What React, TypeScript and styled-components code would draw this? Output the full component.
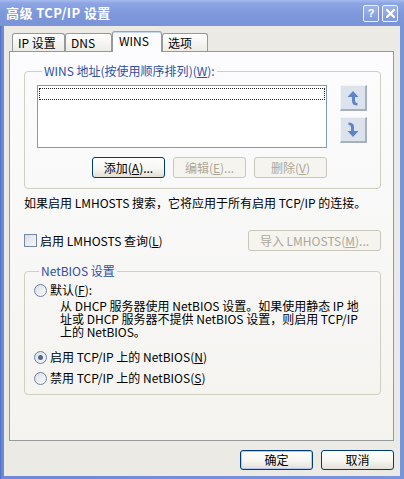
import React from 'react';
import styled, { createGlobalStyle, css } from 'styled-components';

const GlobalStyle = createGlobalStyle`
  * {
    box-sizing: border-box;
  }
  html, body {
    margin: 0;
    padding: 0;
    background: #ffffff;
  }
  body {
    width: 404px;
    height: 479px;
    overflow: hidden;
    font-family: "Noto Sans CJK SC", "Noto Sans", sans-serif;
    font-size: 12px;
    color: #000;
  }
`;

const Window = styled.div`
  width: 404px;
  height: 479px;
  display: flex;
  flex-direction: column;
  background: linear-gradient(to right, #4d6cc2, #6f8ad6 2px, #7a94da);
`;

const TitleBar = styled.div`
  height: 26px;
  flex: none;
  display: flex;
  align-items: center;
  padding: 0 6px 0 6px;
  background: linear-gradient(#a6bbef 0, #8ea6e4 3px, #7f98dc 50%, #7a93d8 100%);
  color: #fff;
`;

const TitleText = styled.div`
  font-weight: 700;
  font-size: 13px;
  line-height: 16px;
  letter-spacing: 0.4px;
  white-space: pre;
`;

const TitleButtons = styled.div`
  margin-left: auto;
  display: flex;
  gap: 3px;
  margin-top: 1px;
`;

const TitleButton = styled.div`
  width: 16px;
  height: 17px;
  border: 1px solid #eef2fc;
  border-radius: 2px;
  background: linear-gradient(#9fb4ea, #7f99de);
  display: flex;
  align-items: center;
  justify-content: center;
  color: #fff;
  font-family: "Liberation Sans", sans-serif;
  font-weight: 700;
  font-size: 11px;
  line-height: 1;
`;

const Body = styled.div`
  flex: 1;
  display: flex;
  flex-direction: column;
  margin: 0 4px 3px 4px;
  padding: 5px 6px 0 5px;
  background: #ebeae5;
`;

const TabStrip = styled.div`
  height: 21px;
  flex: none;
  display: flex;
  align-items: flex-end;
  padding-left: 3px;
  margin-bottom: -1px;
  position: relative;
  z-index: 1;
`;

const Tab = styled.div<{ $w: number; $active?: boolean }>`
  width: ${(p) => p.$w}px;
  height: 18px;
  margin-bottom: 1px;
  padding-left: 5px;
  border: 1px solid #919b9c;
  border-bottom: none;
  border-radius: 3px 3px 0 0;
  background: linear-gradient(#ffffff, #ecebe6);
  line-height: 17px;
  white-space: pre;
  ${(p) =>
    p.$active &&
    css`
      height: 21px;
      margin-bottom: 0;
      padding-left: 6px;
      line-height: 18px;
      border-top-color: #8aa3d2;
      background: #fcfcfe;
      box-shadow: inset 0 1px 0 #c8d5ef;
    `}
`;

const TabPanel = styled.div`
  flex: none;
  height: 390px;
  display: flex;
  flex-direction: column;
  border: 1px solid #919b9c;
  background: linear-gradient(#fcfcfe, #f4f3ef);
  padding: 0 12px 0 14px;
`;

const Group = styled.fieldset<{ $top: number; $pad: string }>`
  margin: ${(p) => p.$top}px 0 0 0;
  padding: ${(p) => p.$pad};
  min-width: 0;
  border: 1px solid #d0d0bf;
  border-radius: 4px;
`;

const Legend = styled.legend`
  margin-left: 5px;
  padding: 0 2px;
  color: #2d4fa3;
  line-height: 14px;
  white-space: pre;
`;

const ListRow = styled.div`
  display: flex;
  gap: 13px;
`;

const ListBox = styled.div`
  width: 290px;
  height: 63px;
  background: #fff;
  border: 1px solid #7f9db9;
  padding: 2px 1px;
`;

const FocusRow = styled.div`
  height: 12px;
  border: 1px dotted #222;
`;

const ArrowColumn = styled.div`
  display: flex;
  flex-direction: column;
  gap: 6px;
`;

const ArrowButton = styled.div`
  width: 27px;
  height: 26px;
  display: flex;
  align-items: center;
  justify-content: center;
  background: #dde3ec;
  border-top: 1px solid #f1f4f8;
  border-left: 1px solid #f1f4f8;
  border-right: 2px solid #a7b0bd;
  border-bottom: 2px solid #a7b0bd;
`;

const ButtonRow = styled.div`
  width: 290px;
  margin-top: 9px;
  display: flex;
  justify-content: flex-end;
  gap: 8px;
`;

const Button = styled.button<{ $w: number; $h?: number; $default?: boolean }>`
  width: ${(p) => p.$w}px;
  height: ${(p) => p.$h ?? 21}px;
  padding: 0;
  border: 1px solid #003c74;
  border-radius: 3px;
  background: linear-gradient(#ffffff, #f6f6f2 55%, #e2dfd6);
  font-family: inherit;
  font-size: 12px;
  line-height: 14px;
  color: #000;
  white-space: pre;
  ${(p) =>
    p.$default &&
    css`
      box-shadow: inset 0 0 0 1px #b5c8ef;
    `}
  &:disabled {
    border-color: #c9c7ba;
    background: #f5f4ee;
    color: #aca899;
  }
`;

const InfoText = styled.div`
  margin-top: 7px;
  line-height: 14px;
  white-space: pre;
`;

const CheckRow = styled.div`
  margin-top: 20px;
  height: 21px;
  display: flex;
  align-items: center;
  justify-content: space-between;
`;

const Choice = styled.label`
  display: flex;
  align-items: center;
  gap: 3px;
  line-height: 14px;
`;

const ChoiceText = styled.span`
  white-space: pre;
`;

const CheckBox = styled.span`
  width: 13px;
  height: 13px;
  border: 1px solid #7688a4;
  background: linear-gradient(135deg, #d9dde6, #f7f8fa);
`;

const RadioRow = styled(Choice)<{ $top?: number }>`
  margin-top: ${(p) => p.$top ?? 0}px;
  height: 14px;
`;

const Radio = styled.span<{ $checked?: boolean }>`
  width: 13px;
  height: 13px;
  border-radius: 50%;
  border: 1px solid #6f82a0;
  background: linear-gradient(135deg, #dadee6, #fbfbfc);
  display: flex;
  align-items: center;
  justify-content: center;
  &::after {
    content: '';
    width: 5px;
    height: 5px;
    border-radius: 50%;
    background: ${(p) => (p.$checked ? '#53688a' : 'transparent')};
  }
`;

const Description = styled.div`
  margin: 2px 0 0 26px;
  line-height: 13px;
  white-space: pre;
`;

const Footer = styled.div`
  margin-top: 9px;
  display: flex;
  justify-content: flex-end;
  gap: 8px;
`;

const UpArrow = () => (
  <svg width="12" height="16" viewBox="0 0 12 16">
    <path d="M6 1 L11.5 7 H8 V11 Q8 13 10.5 13 V15.5 Q5 15.5 5 11 V7 H0.5 Z" fill="#5f84c8" />
  </svg>
);

const DownArrow = () => (
  <svg width="12" height="16" viewBox="0 0 12 16">
    <path d="M6 15 L0.5 9 H4 V5 Q4 3 1.5 3 V0.5 Q7 0.5 7 5 V9 H11.5 Z" fill="#5f84c8" />
  </svg>
);

const CloseGlyph = () => (
  <svg width="9" height="9" viewBox="0 0 9 9">
    <path d="M1 1 L8 8 M8 1 L1 8" stroke="#fff" strokeWidth="2.2" strokeLinecap="square" />
  </svg>
);

const App: React.FC = () => {
  return (
    <>
      <GlobalStyle />
      <Window>
        <TitleBar>
          <TitleText>高级 TCP/IP 设置</TitleText>
          <TitleButtons>
            <TitleButton>?</TitleButton>
            <TitleButton>
              <CloseGlyph />
            </TitleButton>
          </TitleButtons>
        </TitleBar>
        <Body>
          <TabStrip>
            <Tab $w={53}>IP 设置</Tab>
            <Tab $w={47}>DNS</Tab>
            <Tab $w={50} $active>
              WINS
            </Tab>
            <Tab $w={46}>选项</Tab>
          </TabStrip>
          <TabPanel>
            <Group $top={12} $pad="7px 12px 10px 12px">
              <Legend>
                WINS 地址(按使用顺序排列)(<u>W</u>):
              </Legend>
              <ListRow>
                <ListBox>
                  <FocusRow />
                </ListBox>
                <ArrowColumn>
                  <ArrowButton>
                    <UpArrow />
                  </ArrowButton>
                  <ArrowButton>
                    <DownArrow />
                  </ArrowButton>
                </ArrowColumn>
              </ListRow>
              <ButtonRow>
                <Button $w={73}>
                  添加(<u>A</u>)...
                </Button>
                <Button $w={73} disabled>
                  编辑(<u>E</u>)...
                </Button>
                <Button $w={73} disabled>
                  删除(<u>V</u>)
                </Button>
              </ButtonRow>
            </Group>
            <InfoText>如果启用 LMHOSTS 搜索，它将应用于所有启用 TCP/IP 的连接。</InfoText>
            <CheckRow>
              <Choice>
                <CheckBox />
                <ChoiceText>
                  启用 LMHOSTS 查询(<u>L</u>)
                </ChoiceText>
              </Choice>
              <Button $w={133} disabled>
                导入 LMHOSTS(<u>M</u>)...
              </Button>
            </CheckRow>
            <Group $top={13} $pad="5px 9px 9px 9px">
              <Legend>NetBIOS 设置</Legend>
              <RadioRow>
                <Radio />
                <ChoiceText>
                  默认(<u>F</u>):
                </ChoiceText>
              </RadioRow>
              <Description>
                从 DHCP 服务器使用 NetBIOS 设置。如果使用静态 IP 地
                <br />
                址或 DHCP 服务器不提供 NetBIOS 设置，则启用 TCP/IP
                <br />
                上的 NetBIOS。
              </Description>
              <RadioRow $top={12}>
                <Radio $checked />
                <ChoiceText>
                  启用 TCP/IP 上的 NetBIOS(<u>N</u>)
                </ChoiceText>
              </RadioRow>
              <RadioRow $top={7}>
                <Radio />
                <ChoiceText>
                  禁用 TCP/IP 上的 NetBIOS(<u>S</u>)
                </ChoiceText>
              </RadioRow>
            </Group>
          </TabPanel>
          <Footer>
            <Button $w={73} $h={20} $default>
              确定
            </Button>
            <Button $w={73} $h={20}>
              取消
            </Button>
          </Footer>
        </Body>
      </Window>
    </>
  );
};

export default App;
